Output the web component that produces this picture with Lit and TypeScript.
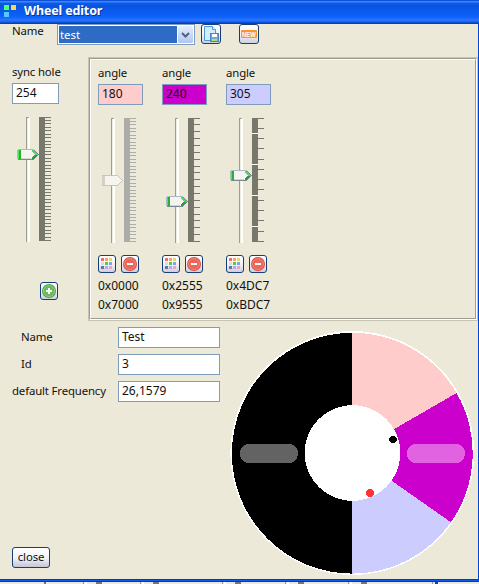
import { LitElement, html, svg, css, nothing } from "lit";

const fieldFont = css`
  :host { font-family: "Noto Sans", "Open Sans", sans-serif; font-size: 12px; color: #111; }
`;

class WheelSlider extends LitElement {
  static properties = {
    value: { type: Number },
    intervals: { type: Number },
    step: { type: Number },
    gaps: { type: Number },
    disabled: { type: Boolean },
  };
  static styles = css`:host { display: block; width: 36px; height: 126px } svg { display: block }`;
  declare value: number;
  declare intervals: number;
  declare step: number;
  declare gaps: number;
  declare disabled: boolean;

  constructor() {
    super();
    this.value = 0;
    this.intervals = 36;
    this.step = 3.43;
    this.gaps = 0;
    this.disabled = false;
  }

  render() {
    const ink = this.disabled ? "#acaca9" : "#77776c";
    const ticks = Array.from({ length: this.intervals + 1 }, (_, i) => Math.floor(i * this.step));
    const gaps = Array.from({ length: this.gaps }, (_, i) => 15 + i * 31);
    const y = this.value;
    return html`<svg width="36" height="126" shape-rendering="crispEdges">
      <rect x="9" y="0" width="1" height="125" fill="#9d9c91"></rect>
      <rect x="10" y="0" width="1" height="125" fill="#efede2"></rect>
      <rect x="11" y="0" width="2" height="125" fill="#fffffc"></rect>
      <rect x="10" y="0" width="2" height="1" fill="#9d9c91"></rect>
      <rect x="22" y="0" width="6" height="124" fill=${ink}></rect>
      ${ticks.map((t) => svg`<rect x="28" y=${t} width="6" height="1" fill=${ink}></rect>`)}
      ${gaps.map((g) => svg`<rect x="22" y=${g} width="6" height="1" fill="#fffff8"></rect>`)}
      ${this.disabled
        ? svg`<g transform=${`translate(0 ${y})`}>
            <path d="M0 0H16L21 5.5L16 11H0Z" fill="#c9c7ba"></path>
            <path d="M2 1H15L19.5 5.5L15 10H2Z" fill="#f5f4ee"></path>
            <rect x="0" y="1" width="3" height="9" fill="#d5d2c3"></rect></g>`
        : svg`<g transform=${`translate(0 ${y})`}>
            <path d="M1 0H17L22 5.5L17 11H1Z" fill="#778892"></path>
            <rect x="1" y="0" width="16" height="1" fill="#a9bac9"></rect>
            <rect x="0" y="1" width="1" height="9" fill="#a9bac9"></rect>
            <path d="M4 1H16V10H4Z" fill="#f5f4ee"></path>
            <path d="M15 1H16.5L21 5.5H15Z" fill="#4fdc58"></path>
            <path d="M15 10H16.5L21 5.5H15Z" fill="#21a52c"></path>
            <path d="M13.5 1L18 5.5L13.5 10Z" fill="#f5f4ee"></path>
            <rect x="4" y="9" width="10" height="1" fill="#d8d5ca"></rect>
            <rect x="1" y="1" width="1" height="9" fill="#5ade61"></rect>
            <rect x="2" y="1" width="2" height="9" fill="#21b42c"></rect></g>`}
    </svg>`;
  }
}
customElements.define("wheel-slider", WheelSlider);

class ToolButton extends LitElement {
  static properties = { icon: { type: String } };
  declare icon: string;
  static styles = css`
    :host { display: block; width: 18px; height: 18px; }
    :host([large]) { width: 20px; height: 20px; }
    .btn { box-sizing: border-box; width: 100%; height: 100%; border: 1px solid #173e78; border-radius: 3px;
      background: linear-gradient(#fff, #f3f3f7 50%, #cfcfdf); display: flex; align-items: center; justify-content: center; }
    svg { display: block; }
    .new { font: bold 7px "Liberation Sans", sans-serif; fill: #fff; }
  `;
  glyph() {
    const colours = ["#f8696b", "#fba06a", "#f6cf5c", "#cbe9bd", "#58c958", "#58b7ea", "#5977b0", "#cf9ddc", "#f0a0d0"];
    switch (this.icon) {
      case "palette":
        return svg`<g shape-rendering="crispEdges">${colours.map((c, i) => svg`<rect x=${2 + (i % 3) * 4} y=${2 + Math.floor(i / 3) * 4} width="3" height="3" fill=${c}></rect>`)}</g>`;
      case "remove":
        return svg`<circle cx="8" cy="8" r="7" fill="#d6493d"></circle><circle cx="8" cy="8" r="5.6" fill="#ee6659" stroke="#f79b8e" stroke-width=".7"></circle><rect x="5" y="7" width="6" height="2" fill="#fff"></rect>`;
      case "add":
        return svg`<circle cx="8" cy="8" r="7" fill="#4b9e46"></circle><circle cx="8" cy="8" r="5.6" fill="#69b95d" stroke="#a5d99b" stroke-width=".7"></circle><path d="M5 8H11M8 5V11" stroke="#fff" stroke-width="2"></path>`;
      case "save":
        return svg`<path d="M1.5 0.5H9.5L12.5 3.5V14.5H1.5Z" fill="#d3ecfb" stroke="#4f9bd6"></path><path d="M9.5 0.5V3.5H12.5" fill="#fff" stroke="#4f9bd6"></path>
          <rect x="7.5" y="7.5" width="8" height="8" fill="#75a4d8" stroke="#4c82bd"></rect><rect x="9" y="8" width="5" height="3" fill="#fff"></rect><rect x="9" y="13" width="5" height="2" fill="#a9e36f"></rect>`;
      case "new":
        return svg`<rect x="0" y="4" width="16" height="8" rx="1" fill="#f8962a"></rect><text class="new" x="1" y="10.5" textLength="14" lengthAdjust="spacingAndGlyphs">NEW</text>`;
    }
    return nothing;
  }
  render() {
    return html`<div class="btn"><svg width="16" height="16">${this.glyph()}</svg></div>`;
  }
}
customElements.define("tool-button", ToolButton);

class FilterWheel extends LitElement {
  static styles = css`:host { display: block; width: 244px; height: 244px } svg { display: block; overflow: visible }`;
  render() {
    const c = 121.3, cy = 122.2, r = 120.4;
    const at = (deg: number) => {
      const a = (deg * Math.PI) / 180;
      return `${(c + r * Math.sin(a)).toFixed(2)} ${(cy - r * Math.cos(a)).toFixed(2)}`;
    };
    const slices: [number, number, string][] = [
      [0, 60, "#ffcccc"], [60, 125, "#cc00cc"], [125, 180, "#ccccff"], [180, 360, "#000"],
    ];
    return html`<svg width="244" height="244" shape-rendering="crispEdges">
      <circle cx=${c} cy=${cy - 0.2} r="122" fill="#fff"></circle>
      ${slices.map(([a, b, f]) => svg`<path d=${`M${c} ${cy}L${at(a)}A${r} ${r} 0 0 1 ${at(b)}Z`} fill=${f}></path>`)}
      <circle cx="121.5" cy="122" r="47.8" fill="#fff"></circle>
      <rect x="9" y="113" width="58" height="19" rx="9" fill="#636363"></rect>
      <rect x="176" y="113" width="58" height="19" rx="9" fill="#e163e1"></rect>
      <ellipse cx="162" cy="108.5" rx="4" ry="3.5"></ellipse>
      <circle cx="139" cy="162" r="4" fill="#ff3333"></circle>
    </svg>`;
  }
}
customElements.define("filter-wheel", FilterWheel);

class AppRoot extends LitElement {
  static styles = [fieldFont, css`
    :host { display: flex; flex-direction: column; width: 479px; height: 584px; overflow: hidden; background: #ece9d8; line-height: 14px; }
    .title { box-sizing: border-box; height: 24px; flex: none; padding: 0 0 2px 4px; display: flex; align-items: center; gap: 8px;
      background: linear-gradient(#0d50dc 0 1px, #3c86f6 1px 2px, #0b5be8 3px, #0854e0 6px, #0a5cf0 13px, #0d63fc 17px, #2d75ff 20px, #1a60ec 22px, #0041c2 23px 24px); }
    .title span { color: #fff; font: bold 12.5px/22px "Noto Sans", sans-serif; letter-spacing: -0.15px; text-shadow: 1px 1px #0b348f; }
    .window { box-sizing: border-box; flex: none; height: 555px; border-right: 1px solid #0046d5; display: flex; flex-direction: column; }
    .top { display: flex; height: 33px; flex: none; padding-left: 12px; }
    .top .name { width: 45px; }
    .name, .label, .text, .close { font-size: 11.4px; letter-spacing: -0.15px; }
    .combo { box-sizing: border-box; width: 138px; height: 21px; border: 1px solid #7f9db9; background: #fff; padding: 1px; display: flex; gap: 1px; margin-right: 6px; }
    .combo .value { flex: 1; background: #2d6bc5; color: #fff; padding-left: 1px; line-height: 17px; font-size: 11.4px; }
    .combo svg { display: block; }
    .top tool-button + tool-button { margin-left: 18px; }
    .channels { display: flex; height: 264px; flex: none; }
    .sync { width: 76px; padding: 7px 0 0 12px; }
    .panel { box-sizing: border-box; width: 390px; border: 1px solid #c7c4b4; }
    .etch { box-sizing: border-box; height: 100%; border: 1px solid; border-color: #9d9c92 #fff #fff #9d9c92; }
    .inner { box-sizing: border-box; height: 100%; border: 1px solid; border-color: #fff #9d9c92 #9d9c92 #fff; padding: 5px 0 0 7px; display: flex; gap: 19px; }
    .channel { width: 45px; }
    .label { display: block; height: 14px; line-height: 15px; white-space: nowrap; }
    .field { box-sizing: border-box; height: 21px; border: 1px solid #7f9db9; background: #fff; padding-left: 3px; line-height: 18px; }
    .sync .field { width: 47px; margin-top: 5px; }
    .channel .field { margin-top: 5px; }
    .pink { background: #ffcccc; }
    .magenta { background: #cc00cc; }
    .lilac { background: #ccccff; }
    .sync wheel-slider { margin: 13px 0 0 5px; }
    .sync tool-button { margin: 39px 0 0 28px; }
    .channel wheel-slider { margin: 13px 0 0 4px; }
    .actions { display: flex; gap: 5px; margin-top: 11px; }
    .hex { display: block; margin-top: 5px; height: 14px; line-height: 15px; }
    .bottom { flex: 1; display: flex; min-height: 0; }
    .left { display: flex; flex-direction: column; width: 231px; }
    .form { display: grid; grid-template-columns: 106px 102px; grid-auto-rows: 21px; row-gap: 6px; padding: 6px 0 0 12px; }
    .form .text { line-height: 20px; white-space: nowrap; }
    .inset { padding-left: 9px; }
    .close { box-sizing: border-box; width: 38px; height: 21px; margin: auto 0 11px 12px; border: 1px solid #173e78; border-radius: 3px;
      background: linear-gradient(#fff, #f3f3f7 50%, #c6c6d6); text-align: center; line-height: 18px; }
    filter-wheel { margin-top: 10px; }
    .edge { height: 3px; flex: none; background: linear-gradient(#0038c0 0 1px, #0a5cf5 1px 2px, #0038c0 2px); }
    .below { display: block; }
  `];

  render() {
    const channels = [
      { angle: 180, tint: "pink", pos: 57, n: 36, step: 3.43, gaps: 0, off: true, hex: ["0x0000", "0x7000"] },
      { angle: 240, tint: "magenta", pos: 78, n: 18, step: 6.86, gaps: 0, off: false, hex: ["0x2555", "0x9555"] },
      { angle: 305, tint: "lilac", pos: 52, n: 12, step: 10.28, gaps: 4, off: false, hex: ["0x4DC7", "0xBDC7"] },
    ];
    const form = [["Name", "Test", "inset"], ["Id", "3", "inset"], ["default Frequency", "26,1579", ""]];
    const below: [number, number, string][] = [
      [44, 2, "#77776c"], [83, 1, "#9d9c92"], [85, 2, "#fff"], [96, 6, "#77776c"], [140, 1, "#9d9c92"], [142, 2, "#fff"],
      [153, 6, "#77776c"], [222, 1, "#9d9c92"], [224, 2, "#fff"], [235, 6, "#77776c"], [285, 1, "#9d9c92"], [287, 2, "#fff"],
      [298, 6, "#77776c"], [348, 1, "#9d9c92"], [350, 2, "#fff"], [361, 6, "#77776c"], [432, 1, "#9d9c92"], [435, 3, "#0046d5"],
    ];
    return html`
      <div class="title">
        <svg width="12" height="13" shape-rendering="crispEdges">
          <rect x="0" y="0" width="5" height="5" fill="#4fff7c"></rect>
          <rect x="7" y="0" width="5" height="5" fill="#ffd35a"></rect>
          <rect x="0" y="7" width="5" height="5" fill="#55c8ff"></rect>
        </svg>
        <span>Wheel editor</span>
      </div>
      <div class="window">
        <div class="top">
          <span class="name">Name</span>
          <div class="combo"><span class="value">test</span>
            <svg width="15" height="17"><defs><linearGradient id="g" x2="0" y2="1"><stop stop-color="#e6eefe"></stop><stop offset="1" stop-color="#b2c5f2"></stop></linearGradient></defs>
              <rect width="15" height="17" rx="1.5" fill="url(#g)"></rect><path d="M4 7L7.5 10.5L11 7" fill="none" stroke="#4d6185" stroke-width="2"></path></svg>
          </div>
          <tool-button large icon="save"></tool-button>
          <tool-button large icon="new"></tool-button>
        </div>
        <div class="channels">
          <div class="sync">
            <span class="label">sync hole</span>
            <div class="field">254</div>
            <wheel-slider .value=${32}></wheel-slider>
            <tool-button icon="add"></tool-button>
          </div>
          <div class="panel"><div class="etch"><div class="inner">
            ${channels.map((c) => html`<div class="channel">
              <span class="label">angle</span>
              <div class="field ${c.tint}">${c.angle}</div>
              <wheel-slider .value=${c.pos} .intervals=${c.n} .step=${c.step} .gaps=${c.gaps} .disabled=${c.off}></wheel-slider>
              <div class="actions"><tool-button icon="palette"></tool-button><tool-button icon="remove"></tool-button></div>
              ${c.hex.map((h) => html`<span class="hex">${h}</span>`)}
            </div>`)}
          </div></div></div>
        </div>
        <div class="bottom">
          <div class="left">
            <div class="form">${form.map(([k, v, cls]) => html`<span class="text ${cls}">${k}</span><div class="field">${v}</div>`)}</div>
            <div class="close">close</div>
          </div>
          <filter-wheel></filter-wheel>
        </div>
      </div>
      <div class="edge"></div>
      <svg class="below" width="479" height="2" shape-rendering="crispEdges">
        ${below.map(([x, w, f]) => svg`<rect x=${x} y="0" width=${w} height="2" fill=${f}></rect>`)}
      </svg>`;
  }
}
customElements.define("app-root", AppRoot);
